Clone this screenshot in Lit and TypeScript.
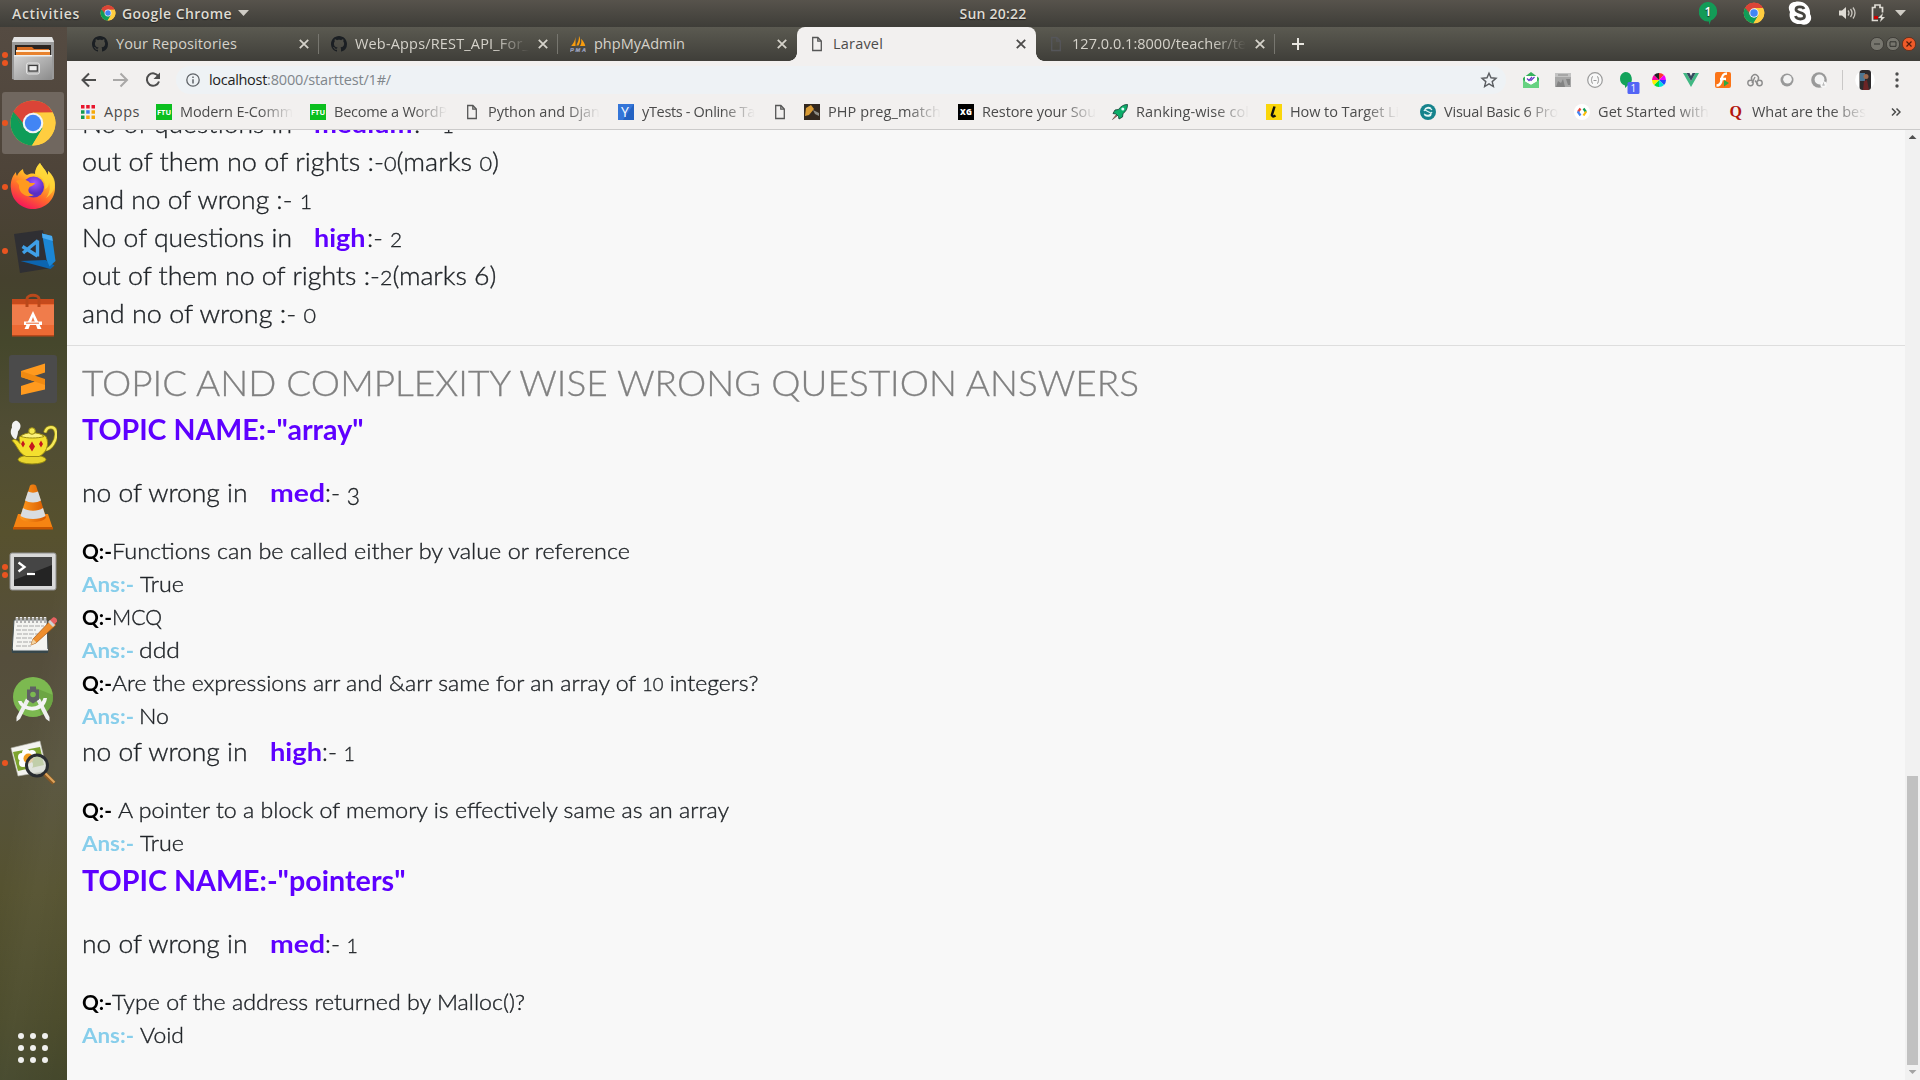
import { LitElement, html, css, nothing, TemplateResult } from "lit";
import { customElement, property, query } from "lit/decorators.js";

/* Text set to an exact width, by letter spacing or by stretching the glyphs. */
@customElement("fit-text")
class FitText extends LitElement {
  @property() text = "";
  @property({ type: Number }) w = 0;
  @property({ type: Boolean }) stretch = false;
  @query(".run") run!: HTMLElement;

  static styles = css`
    :host { display: block; white-space: pre; flex: none; }
    .run { display: inline-block; transform-origin: 0 50%; }
    .low { font-size: 0.8em; -webkit-text-stroke: 0.3px currentColor; }
    .drop { position: relative; top: 0.12em; font-size: 0.92em; }
  `;

  updated() {
    this.style.width = `${this.w}px`;
    this.run.style.letterSpacing = "0";
    this.run.style.transform = "none";
    const natural = this.run.getBoundingClientRect().width;
    if (this.stretch) {
      this.run.style.transform = `scaleX(${this.w / natural})`;
    } else {
      this.run.style.letterSpacing = `${(this.w - natural) / Math.max(1, this.text.length)}px`;
    }
  }

  render() {
    const parts = this.stretch ? this.text.split(/(\d)/) : [this.text];
    return html`<span class="run">${parts.map((p) =>
      /^[012]$/.test(p) && this.stretch ? html`<span class="low">${p}</span>`
      : p === "3" && this.stretch ? html`<span class="drop">${p}</span>` : p)}</span>`;
  }
}

const chrome = html`<svg viewBox="0 0 48 48"><circle cx="24" cy="24" r="22.5" fill="#fcc934"/>
<path d="M24 24 4.500 12.800A22.500 22.500 0 0 0 23 46.500L34 29z" fill="#0f9d58"/>
<path d="M4.500 12.800A22.500 22.500 0 0 1 43.600 13.200H24L14 29.500z" fill="#db4437"/>
<path d="M43.600 13.200A22.500 22.500 0 0 1 23 46.500L33.500 29 30 14z" fill="#ffcd40"/>
<path d="M4.500 12.800 14 29.500 24 24z" fill="#0f9d58"/><path d="M4.500 12.800A22.500 22.500 0 0 1 43.600 13.200H24L14 24z" fill="#db4437"/>
<circle cx="24" cy="24" r="10.300" fill="#f4f4f4"/><circle cx="24" cy="24" r="8.200" fill="#4285f4"/></svg>`;

const github = html`<svg viewBox="0 0 16 16"><path fill="#1b1f23" fill-rule="evenodd" d="M8 0C3.580 0 0 3.580 0 8c0 3.540 2.290 6.530 5.470 7.590.4.070.550-.170.550-.380 0-.190-.010-.820-.010-1.490-2.010.370-2.530-.490-2.690-.940-.090-.230-.480-.940-.820-1.130-.280-.150-.680-.520-.010-.530.630-.010 1.080.580 1.230.820.720 1.210 1.870.870 2.330.660.070-.520.280-.870.510-1.070-1.780-.2-3.640-.890-3.640-3.950 0-.870.310-1.590.820-2.150-.080-.2-.360-1.020.080-2.120 0 0 .670-.210 2.200.820.640-.180 1.320-.270 2-.270s1.360.090 2 .270c1.530-1.040 2.200-.820 2.200-.820.440 1.100.160 1.920.080 2.120.510.560.820 1.270.820 2.150 0 3.070-1.870 3.750-3.650 3.950.290.250.540.730.540 1.480 0 1.070-.010 1.930-.010 2.200 0 .210.150.460.550.380A8.010 8.010 0 0 0 16 8c0-4.420-3.580-8-8-8z"/></svg>`;
const page = (c: string) => html`<svg viewBox="0 0 16 16"><path d="M3.700 1.500h5.200l3.400 3.500v9.500H3.700zM8.800 1.800v3.400h3.400" fill="none" stroke=${c} stroke-width="1.300"/></svg>`;
const cross = html`<svg class="x" viewBox="0 0 10 10"><path d="M1.500 1.500l7 7M8.500 1.500l-7 7" fill="none" stroke="currentColor" stroke-width="1.500"/></svg>`;
const pma = html`<svg viewBox="0 0 16 16"><path d="M5.500 1v9H1.200C3 8 5 5 5.500 1zM9 0c2 3 1 7-.5 9.500H6.300C8 6 9 4 9 0zM11 3c2 1 4 5 4.300 7H10c1.500-2 1.600-5 1-7z" fill="#f89c0e"/><text x="0" y="15.500" font-size="5.600" font-weight="bold" font-style="italic" font-family="Liberation Sans" fill="#6c78af" stroke="#ddd" stroke-width=".2" textLength="16">PMA</text></svg>`;

const dockIcons: { name: string; dots: number; svg: TemplateResult }[] = [
  { name: "files", dots: 2, svg: html`<svg viewBox="0 0 48 48"><defs><linearGradient id="fa" x2="1" y2="1"><stop stop-color="#d5d5d5"/><stop offset="1" stop-color="#8b8b8b"/></linearGradient></defs>
<path d="M5 2h38l2 4v38l-3 1H6l-3-1V6z" fill="#9a9a9a"/><path d="M5 2h38l2 5H3z" fill="#e3e3e3"/><path d="M6 10h36v12H6z" fill="#2b2420"/><path d="M8 12h15l2 2h15v4H8z" fill="#d76b21"/><path d="M7 15h34v3H7z" fill="#fff0dc"/><path d="M7 17h34v5H7z" fill="#e8822d"/><path d="M5 20h38v25H5z" fill="url(#fa)"/><path d="M5 20h38v1.500H5z" fill="#eee"/><rect x="17.500" y="28" width="13" height="11" rx="2" fill="#b4b4b4" stroke="#e3e3e3"/><rect x="19.800" y="30.500" width="8.500" height="5.500" fill="#eee" stroke="#3d3d3d" stroke-width="1.200"/></svg>` },
  { name: "chrome", dots: 1, svg: chrome },
  { name: "firefox", dots: 1, svg: html`<svg viewBox="0 0 48 48"><defs><linearGradient id="ff" x1=".8" y1="0" x2=".3" y2="1"><stop offset="0" stop-color="#fff44f"/><stop offset=".35" stop-color="#ffbd27"/><stop offset=".65" stop-color="#ff6a2b"/><stop offset="1" stop-color="#f5105d"/></linearGradient><radialGradient id="fp" cx=".55" cy=".3"><stop stop-color="#a455ff"/><stop offset="1" stop-color="#5a2fc4"/></radialGradient></defs>
<path d="M31 0c-4 4-5 8-5 11-3-1-6 0-8 1-3-1-4-4-4-6-3 2-5 4-6 7-1-2-1-3-1-4C3 13 1 20 2 26c1 12 11 20 22 20 13 0 22-10 22-21 0-8-3-14-7-17 0 2 0 3-.5 4C37 7 33 4 31 0z" fill="url(#ff)"/><circle cx="24.500" cy="24" r="10.500" fill="url(#fp)"/><path d="M7 18c6-3 12-1 14 2h5c-1 3-5 3-6 5-2 3 1 7 5 7-8 4-16-3-15-10z" fill="#ff9a1f"/><path d="M31 0c-4 4-5 8-4 12 7 2 10 7 9 14 3-1 4-4 4-7 2 6 0 12-3 16 7-5 9-10 9-14 0-7-5-11-7-13 0 2 0 3-.5 4C37 7 33 4 31 0z" fill="#ffd83a" opacity=".75"/></svg>` },
  { name: "code", dots: 1, svg: html`<svg viewBox="0 -1 48 48"><path d="M5 6 34 2l8 38-31 5z" fill="#2f2f33"/><path d="M11.500 33l25-1 9 5.500-4 3.500z" fill="#0c65b0"/><path d="M33 5.500 43 8l3.500 25-6 5.500-3-7z" fill="#1b86d4"/><path d="M33 5.500 43 8l.8 5-10.200-3z" fill="#48aaf0"/><path d="M28.500 12.500v16M29 12.500 14 25M13.500 18.500l15 9.500" fill="none" stroke="#3f9fe6" stroke-width="3.400"/></svg>` },
  { name: "software", dots: 0, svg: html`<svg viewBox="0 0 48 48"><path d="M3 8h42v37H3z" fill="#ec6a34"/><path d="M3 8h42v5H3z" fill="#c64a1c"/><path d="M3 14h42v20H3z" fill="#f07c4b"/><path d="M18 16V8c0-5 12-5 12 0v8" fill="none" stroke="#b9481b" stroke-width="3"/><path d="M24 20l8.500 18H28.500L24 26l-4.500 12H15.500z" fill="#fff"/><path d="M15 30.500h18v3.500H15z" fill="#fff"/><path d="M17 32.200h13" stroke="#ec6a34"/><path d="M3 44h42v1.500H3z" fill="#b9481b"/></svg>` },
  { name: "sublime", dots: 0, svg: html`<svg viewBox="0 0 48 48"><rect width="48" height="48" rx="3" fill="#4b4b4b"/><path d="M36 8.500v9l-14 4.500 14 4.500v8L12 40v-9l14-4.500-14-4.500v-6z" fill="#ff9a1e"/><path d="M12 16v6l24 8v-6z" fill="#f08a12"/></svg>` },
  { name: "teapot", dots: 0, svg: html`<svg viewBox="0 1.500 48 48"><path d="M5 21c-5-5-3-9-2-11-1-5 4-9 7-5 3 3 1 7-1 9 0 3-1 5-2 8z" fill="#f2f2f2"/><path d="M36 15c2-7 10-7 11 0s-5 18-12 17" fill="none" stroke="#8f8412" stroke-width="4"/><path d="M36 15c2-7 10-7 11 0s-5 18-12 17" fill="none" stroke="#f5e85a" stroke-width="2.400"/><ellipse cx="23" cy="42" rx="14" ry="4.500" fill="#e8d52e" stroke="#8f8412"/><path d="M10 20c4-5 22-5 27-1 4 8 0 17-7 20H17C9 35 9 29 3 23c2-2 5-1 8 3z" fill="#f3df2e" stroke="#9a8a13"/><path d="M12 19c3-5 19-5 23 0-6 2-17 2-23 0z" fill="#fbf27d" stroke="#9a8a13"/><circle cx="23" cy="13.500" r="3.300" fill="#f6e94f" stroke="#9a8a13"/><path d="M23 24l3 5-3 5-3-5zM14 23l2 3.500-2 3.500-2-3.500zM32 23l2 3.500-2 3.500-2-3.500z" fill="#c6161d"/></svg>` },
  { name: "vlc", dots: 0, svg: html`<svg viewBox="0 0 48 48"><defs><linearGradient id="vl"><stop stop-color="#ff9b1f"/><stop offset="1" stop-color="#d85a00"/></linearGradient></defs><path d="M9 31h30l5 15H4z" fill="#f68412"/><path d="M4 44h40v2.500H4z" fill="#c65500"/><path d="M21 2.500c1-1.500 5-1.500 6 0l10 32c-3 6-23 6-26 0z" fill="url(#vl)"/><path d="M19 8.500c3 1.500 7 1.500 10 0l3 9c-4 2.500-12 2.500-16 0zM14 25c5 3.500 15 3.500 20 0l2.500 8c-6 4-19 4-25 0z" fill="#d9dde0"/></svg>` },
  { name: "terminal", dots: 2, svg: html`<svg viewBox="0 -2 48 48"><rect x="1" y="4" width="46" height="37" rx="2" fill="#d9d9d9" stroke="#8e8e8e"/><rect x="5" y="8" width="38" height="29" fill="#242424"/><path d="M5 8h38v8L5 31z" fill="#454545"/><path d="M9.500 13.500l6 4.500-6 4.500" fill="none" stroke="#fff" stroke-width="2.300"/><path d="M18 25h8" stroke="#fff" stroke-width="2.200"/></svg>` },
  { name: "notes", dots: 0, svg: html`<svg viewBox="0 -1 48 48"><path d="M5 8h33l1 32H3z" fill="#f4f4f1" stroke="#465053"/><path d="M3 37h36v4H3z" fill="#37474b"/><path d="M4 37h35v1.500H4z" fill="#eee"/><path d="M8 14h27M7 18h20M8 22h21M7 26h16M8 30h17M7 34h15" stroke="#a8a8a8" stroke-dasharray="5 1"/><path d="M8 11V5M12 11V5M16 11V5M20 11V5M24 11V5M28 11V5M32 11V5M36 11V5" stroke="#eee" stroke-width="2.500"/><path d="M8 11V6M12 11V6M16 11V6M20 11V6M24 11V6M28 11V6M32 11V6M36 11V6" stroke="#555" stroke-width=".8"/><path d="M42 8l5 5-20 18-5 2 2-6z" fill="#ee8e2e" stroke="#a35613" stroke-width=".7"/><path d="M40 9l4-3.500c2-1 5 2 4 4L45 13z" fill="#e76161"/><path d="M39 10l2-2 5 5-2 2z" fill="#cfd3d4"/><path d="M22 33l2-6 3.500 3.500z" fill="#f3d3a0"/></svg>` },
  { name: "studio", dots: 0, svg: html`<svg viewBox="0 0 48 48"><circle cx="24" cy="22" r="20" fill="#7cb950"/><path d="M24 12l20 8A20 20 0 0 1 32 40z" fill="#659c3d" opacity=".7"/><path d="M20.500 25.500 11 44l-3.500 2.500V42L17 23.500zM27.500 25.500 37 44l3.500 2.500V42L31 23.500z" fill="#eee"/><path d="M9 26c3 12 27 14 29-3h-3.500c-3 11-18 11-22 3z" fill="#f4f4f4"/><path d="M24 11.500v4" stroke="#5f6163" stroke-width="6"/><path d="M18 14.500h12v10l-6 4-6-4z" fill="#5f6163"/><circle cx="24" cy="19.500" r="2.800" fill="#7cb950"/></svg>` },
  { name: "viewer", dots: 1, svg: html`<svg viewBox="0 0 48 48"><path d="M2 9 31 2l7 30-29 5z" fill="#f3f3ef" stroke="#b3b3aa" stroke-width=".6"/><path d="M4 13 31 8l4 18-26 6z" fill="#7da32f"/><g fill="#fff"><circle cx="17" cy="14" r="4"/><circle cx="23" cy="15" r="4"/><circle cx="13" cy="18" r="4"/><circle cx="14" cy="24" r="4"/><circle cx="20" cy="26" r="4"/></g><circle cx="19.500" cy="19.500" r="5" fill="#f09b1c"/><circle cx="28" cy="26.500" r="10" fill="#d8dcd4" opacity=".75"/><circle cx="28" cy="26.500" r="10.500" fill="none" stroke="#2a2d31" stroke-width="3"/><path d="M36 35l9 9" stroke="#8b5a24" stroke-width="4.500"/><path d="M36.500 34.500l9 9" stroke="#e0a45c" stroke-width="2"/></svg>` },
];

const ftu = html`<svg viewBox="0 0 16 16"><path fill="#0bbf1f" d="M0 0h16v16H0z"/><text x="1" y="10.800" font-family="Open Sans" font-weight="bold" font-size="7.500" fill="#fff" textLength="14" lengthAdjust="spacingAndGlyphs">FTU</text></svg>`;
const bookmarks: { icon: TemplateResult; text: string; w?: number }[] = [
  { icon: ftu, text: "Modern E-Comm", w: 113 },
  { icon: ftu, text: "Become a WordP", w: 113 },
  { icon: page("#565656"), text: "Python and Djan", w: 112 },
  { icon: html`<svg viewBox="0 0 16 16"><path fill="#2462c2" d="M0 0h16v16H0z"/><path d="M0 0h16L5 16H0z" fill="#3475d8"/><text x="3" y="13" font-family="Open Sans" font-size="14" fill="#fff" textLength="10">Y</text></svg>`, text: "yTests - Online Ta", w: 113 },
  { icon: page("#565656"), text: "" },
  { icon: html`<svg viewBox="0 0 16 16"><path fill="#33281f" d="M0 0h16v16H0z"/><path d="M2 4 7 1l3 4-5 6-4 1z" fill="#d99b35"/><path d="M9 6l6 3v3l-4-2z" fill="#8d8b85"/></svg>`, text: "PHP preg_match", w: 113 },
  { icon: html`<svg viewBox="0 0 16 16"><path d="M0 0h16v16H0z"/><text x="2" y="11" font-family="Open Sans" font-weight="800" font-size="8" fill="#fff" textLength="12">XG</text></svg>`, text: "Restore your Sou", w: 114 },
  { icon: html`<svg viewBox="0 0 16 16"><path d="M15.500.5c-4 0-7 2-9 5L3 6 1 9.500l3 .5 2.500 2.500L7 15l3.500-2 .5-3.500c3-2 4.500-5 4.500-9z" fill="#0cae69" stroke="#194a3d" stroke-width=".9"/><circle cx="10.800" cy="5" r="1.500" fill="#dff"/><path d="M4 11l-3.500 4.500L5 12z" fill="#e25839" stroke="#444" stroke-width=".6"/></svg>`, text: "Ranking-wise col", w: 113 },
  { icon: html`<svg viewBox="0 0 16 16"><path fill="#fad60a" d="M0 0h16v16H0z"/><path d="M8.500 2.500 6 10.500c-.4 2 1.300 2.500 3.500 1" fill="none" stroke="#111" stroke-width="2.500"/></svg>`, text: "How to Target Li", w: 109 },
  { icon: html`<svg viewBox="0 0 16 16"><circle cx="8" cy="8" r="8" fill="#15838c"/><path d="M11 4.500c-2-2-6-1-6 1s6 2 6 4.500-4 3-6.500 1M4 7c1-3 6-4 8-1M4 10c3 2 6 2 8-2" fill="none" stroke="#e5f6f6" stroke-width="1.200"/></svg>`, text: "Visual Basic 6 Pro", w: 114 },
  { icon: html`<svg viewBox="0 0 16 16"><circle cx="8" cy="8" r="8" fill="#fff"/><g fill="none" stroke-width="2.200"><path d="M6.500 4.500 4 8" stroke="#e94335"/><path d="M3.700 7.500l2.800 4" stroke="#4285f4"/><path d="M9.500 4.500 12 8" stroke="#0f9d58"/><path d="M12.200 7.500l-2.700 4" stroke="#fbbc05"/></g></svg>`, text: "Get Started with", w: 111 },
  { icon: html`<svg viewBox="0 0 16 16"><text x="1.500" y="13" font-family="Liberation Serif" font-weight="bold" font-size="16" fill="#b3160d">Q</text></svg>`, text: "What are the bes", w: 114 },
];

const exts: TemplateResult[] = [
  html`<svg viewBox="0 0 16 16"><path d="M0 6 8 0l8 6v10H0z" fill="#35b15b"/><path d="M2 4h12v6l-6 3-6-3z" fill="#fff"/><path d="M0 8l8 5 8-5v8H0z" fill="#68d282"/><path d="M4 6.500l2 2 3-3.500M7.500 8l.5.500 3.500-3.500" fill="none" stroke="#6537c5" stroke-width="1.200"/></svg>`,
  html`<svg viewBox="0 0 16 16"><path fill="#a7a7a7" d="M0 1h16v14H0z"/><path d="M0 1h16v4H0z" fill="#c3c3c3"/><path d="M3 3h10" stroke="#8a8a8a"/><path d="M1 15l2-6 3 2 2-4 2 8zM11 7h4v6h-2z" fill="#838383"/></svg>`,
  html`<svg viewBox="0 0 16 16"><circle cx="8" cy="8" r="7.300" fill="#f8f8f8" stroke="#9b9b9b" stroke-width="1.200"/><path d="M6 4.500c-2 0-.5 3-2 3.500 1.500.5 0 3.500 2 3.500M10 4.500c2 0 .5 3 2 3.500-1.500.5 0 3.500-2 3.500M6.500 8.500h3" fill="none" stroke="#999"/></svg>`,
  html`<svg viewBox="0 0 16 16" overflow="visible"><path d="M4.500 0a6.800 7 0 0 1 3 13.300L4.500 16v-2.500A6.800 7 0 0 1 4.500 0z" transform="translate(1.500)" fill="#13a35b"/><rect x="8.500" y="10" width="12" height="12" rx="1.500" fill="#5365f5"/><text x="11.500" y="19.700" font-size="10" font-family="Open Sans" fill="#fff">1</text></svg>`,
  html`<svg viewBox="0 0 16 16"><path d="M8 8V1a7 7 0 0 1 5 2z" fill="#f33"/><path d="M8 8l5-5a7 7 0 0 1 2 5z" fill="#e0f"/><path d="M8 8h7a7 7 0 0 1-2 5z" fill="#24f"/><path d="M8 8l5 5a7 7 0 0 1-5 2z" fill="#0dd"/><path d="M8 8v7a7 7 0 0 1-5-2z" fill="#0d4"/><path d="M8 8l-5 5a7 7 0 0 1-2-5z" fill="#fe0"/><path d="M8 8H1a7 7 0 0 1 2-5z" fill="#f0a"/><path d="M8 8 3 3a7 7 0 0 1 5-2z" fill="#222"/></svg>`,
  html`<svg viewBox="0 0 16 16"><path d="M0 1h3.500L8 9l4.500-8H16L8 15z" fill="#41b883"/><path d="M3.500 1h3L8 4l1.500-3h3L8 9z" fill="#35495e"/></svg>`,
  html`<svg viewBox="0 0 16 16"><rect width="16" height="16" rx="2" fill="#fb7417"/><path d="M12 1.500c-5 0-5 4-5.500 7-.5 3-2 5-5 5M5 7h6" fill="none" stroke="#fff" stroke-width="2.400"/><path d="M9 8l5 3-5 3.500z" fill="#2caa40"/></svg>`,
  html`<svg viewBox="0 0 16 16"><g fill="none" stroke="#8c8c8c" stroke-width="1.400"><path d="M5 8a3.500 3.500 0 1 1 6 0M8 8.500l3 4M8 5l-3 6"/><circle cx="3.500" cy="11" r="2.700"/><circle cx="12.500" cy="11" r="2.700"/></g></svg>`,
  html`<svg viewBox="0 0 16 16"><circle cx="8" cy="8" r="6.500" fill="#999"/><circle cx="8.500" cy="7.200" r="4.300" fill="#f3f3f3"/></svg>`,
  html`<svg viewBox="0 0 16 16"><circle cx="8" cy="8" r="7.800" fill="#999"/><circle cx="8.500" cy="7.500" r="4.900" fill="#f3f3f3"/><circle cx="12.500" cy="12.500" r="3.200" fill="#f7f7f7"/><path d="M12.500 10.500v3M11 13h3" stroke="#bbb"/></svg>`,
];

const tabs = [
  { icon: github, text: "Your Repositories", w: 121, kind: "" },
  { icon: github, text: "Web-Apps/REST_API_For_", w: 174, kind: "long" },
  { icon: pma, text: "phpMyAdmin", w: 91, kind: "" },
  { icon: page("#565656"), text: "Laravel", w: 50, kind: "active" },
  { icon: page("#55565a"), text: "127.0.0.1:8000/teacher/te", w: 174, kind: "long" },
];

type Seg = [text: string, width: number, cls?: string, gap?: number];
const count = (w: number): Seg => ["No of questions in", w, ""];
const wrong: Seg = ["no of wrong in", 165.5];
const q: Seg = ["Q:-", 30, "q"];
const a: Seg = ["Ans:-", 52, "a"];
const lines: { kind: string; segs: Seg[] }[] = [
  { kind: "p", segs: [count(210), ["medium", 98.5, "key", 22], [":-", 16, "", 1], ["1", 12, "", 12]] },
  { kind: "p", segs: [["out of them no of rights :-0(marks 0)", 417]] },
  { kind: "p", segs: [["and no of wrong :- 1", 230]] },
  { kind: "p", segs: [count(210), ["high", 51.5, "key", 22], [":- 2", 35, "", 1]] },
  { kind: "p", segs: [["out of them no of rights :-2(marks 6)", 414.5]] },
  { kind: "p", segs: [["and no of wrong :- 0", 234]] },
  { kind: "rule", segs: [] },
  { kind: "h", segs: [["TOPIC AND COMPLEXITY WISE WRONG QUESTION ANSWERS", 1057]] },
  { kind: "topic", segs: [['TOPIC NAME:-"array"', 281.5]] },
  { kind: "p spaced", segs: [wrong, ["med", 55, "key", 22], [":- 3", 35, "", 0]] },
  { kind: "s first", segs: [q, ["Functions can be called either by value or reference", 518]] },
  { kind: "s", segs: [a, ["True", 44, "", 5.5]] },
  { kind: "s", segs: [q, ["MCQ", 50]] },
  { kind: "s", segs: [a, ["ddd", 41, "", 5]] },
  { kind: "s", segs: [q, ["Are the expressions arr and &arr same for an array of 10 integers?", 646.5]] },
  { kind: "s", segs: [a, ["No", 30, "", 5]] },
  { kind: "p", segs: [wrong, ["high", 52, "key", 22], [":- 1", 33, "", 0]] },
  { kind: "s first", segs: [q, ["A pointer to a block of memory is effectively same as an array", 611, "", 5.500]] },
  { kind: "s", segs: [a, ["True", 44, "", 5.5]] },
  { kind: "topic again", segs: [['TOPIC NAME:-"pointers"', 323.5]] },
  { kind: "p spaced", segs: [wrong, ["med", 55, "key", 22], [":- 1", 33, "", 0]] },
  { kind: "s first", segs: [q, ["Type of the address returned by Malloc()?", 413]] },
  { kind: "s", segs: [a, ["Void", 44, "", 5.5]] },
];

@customElement("app-root")
class AppRoot extends LitElement {
  static styles = css`
    :host { display: flex; flex-direction: column; width: 1920px; height: 1080px; overflow: hidden; font-family: "Open Sans", "Noto Sans", sans-serif; font-size: 14.5px; }
    * { box-sizing: border-box; }
    svg { display: block; flex: none; }
    .panel { height: 27px; flex: none; display: flex; align-items: center; justify-content: space-between; padding-bottom: 1px; background: linear-gradient(#57534c, #3e3d38); color: #dfdbd2; font-weight: 600; font-size: 14px; text-shadow: 0 1px 1px #222; }
    .side { display: flex; align-items: center; width: 860px; }
    .side.left { padding-left: 12px; }
    .side.right { justify-content: flex-end; padding-right: 14px; }
    .clock { margin-left: 66px; }
    .i18 { width: 16px; height: 16px; margin: 0 6px 0 20px; }
    .caret { width: 11px; height: 6px; margin-left: 6px; background: #cfccc5; clip-path: polygon(0 0, 100% 0, 50% 100%); }
    .bubble { width: 18px; height: 23px; }
    .tray-chrome { width: 22px; height: 22px; margin-left: 26px; }
    .skype { width: 24px; height: 24px; margin-left: 23px; }
    .vol { width: 18px; height: 16px; margin-left: 26px; }
    .bat { width: 16px; height: 18px; margin-left: 14px; }
    .side.right .caret { margin-left: 9px; }
    .desk { flex: 1; display: flex; min-height: 0; }
    .dock { width: 67px; flex: none; display: flex; flex-direction: column; background: linear-gradient(100deg, transparent 60%, #ffffff08 75%, transparent), linear-gradient(#554b42, #4d4338 15%, #45412e 24%, #45472c 30%, #504d34 38%, #57512e 48%, #554e3c 60%, #57533d 70%, #555230 82%, #4b4b2b 94%, #44472b); }
    .app { height: 64px; flex: none; display: flex; align-items: center; }
    .dots { width: 9px; flex: none; display: flex; flex-direction: column; gap: 2px; padding-left: 2px; }
    .dot { width: 6px; height: 6px; border-radius: 50%; background: #e95420; }
    .app svg { width: 48px; height: 48px; }
    .app.on { margin: 1px 3px 1px 2px; height: 62px; border-radius: 3px; background: #70675f; }
    .app.on .dots { width: 7px; padding-left: 0; }
    .grid { margin: auto 0 17px 18px; display: grid; grid-template-columns: repeat(3, 6px); gap: 6px; }
    .grid i { width: 6px; height: 6px; border-radius: 50%; background: #f0f0ee; }
    .window { flex: 1; display: flex; flex-direction: column; min-width: 0; background: #f2f0ef; }
    .tabs { height: 34px; flex: none; display: flex; padding-left: 13px; background: linear-gradient(#5b5a51, #3f3e39); color: #d5d2ca; }
    .tab { width: 239px; display: flex; align-items: center; padding: 0 9px 1px 12px; gap: 8px; position: relative; }
    .tab:not(.active)::after { content: ""; position: absolute; right: 0; top: 7px; height: 20px; width: 1px; background: #77766f; }
    .tab.pre::after { display: none; }
    .tab svg { width: 16px; height: 16px; }
    .tab .x { width: 12px; height: 12px; margin-left: auto; }
    .tab.active { background: #f2f0ef; color: #4c4b4a; border-radius: 8px 8px 0 0; }
    .tab.active::before, .tab.active::after { content: ""; position: absolute; bottom: 0; width: 8px; height: 8px; }
    .tab.active::before { left: -8px; background: radial-gradient(circle at 0 0, transparent 7.5px, #f2f0ef 8px); }
    .tab.active::after { right: -8px; background: radial-gradient(circle at 100% 0, transparent 7.5px, #f2f0ef 8px); z-index: 1; }
    .long fit-text { margin-right: -20px; }
    .long fit-text, .bm fit-text { -webkit-mask-image: linear-gradient(90deg, #000 calc(100% - 34px), transparent); }
    .plus { width: 14px; height: 14px; margin: 10px 0 0 16px; }
    .buttons { margin-left: auto; display: flex; align-items: center; gap: 2px; padding: 0 4px 1px 0; }
    .buttons svg { width: 14px; height: 14px; }
    .bar { height: 38px; flex: none; display: flex; align-items: center; padding: 0 0 1px 13px; color: #505050; }
    .bar .nav { width: 18px; height: 18px; margin-right: 14px; }
    .omni { width: 1330px; flex: none; height: 28px; border-radius: 14px; background: #eef2f5; display: flex; align-items: center; padding: 0 8px 0 10px; color: #80868b; }
    .info { width: 14px; height: 14px; margin-right: 9px; }
    .host { color: #222; }
    .star { width: 18px; height: 18px; margin-left: auto; }
    .exts { display: flex; gap: 16px; margin-left: 17px; }
    .exts svg { width: 16px; height: 16px; }
    .sep { width: 1px; height: 20px; background: #cac8c7; margin: 0 12px 0 15px; }
    .avatar { width: 20px; height: 20px; }
    .menu { width: 4px; height: 16px; margin-left: 20px; }
    .marks { height: 31px; flex: none; display: flex; align-items: center; gap: 16px; padding: 0 0 5px 13px; color: #4b4b4b; border-bottom: 1px solid #cbcaca; }
    .bm { display: flex; align-items: center; gap: 8px; }
    .bm svg { width: 16px; height: 16px; }
    .bm.apps fit-text { -webkit-mask-image: none; }
    .more { width: 10px; height: 10px; margin-left: 9px; }
    .view { flex: 1; display: flex; min-height: 0; }
    .page { flex: 1; overflow: hidden; background: #f8f8f8; color: #212529; font-family: Lato, sans-serif; }
    .lines { margin-top: -26px; }
    .row { display: flex; padding-left: 15px; }
    .p { height: 38px; line-height: 38px; font-size: 25.2px; font-weight: 400; }
    .s { height: 33px; line-height: 33px; font-size: 20.8px; }
    .s.first { margin-top: 23px; }
    .rule { height: 1px; background: #dedede; margin: 13px 0 14px; }
    .h { height: 44px; line-height: 46px; font-size: 35.5px; font-weight: 300; color: #808080; -webkit-text-stroke: 0.3px #808080; }
    .topic { height: 42px; line-height: 42px; font-size: 28px; font-weight: 700; color: #5e00ff; margin-top: 4px; }
    .topic.again { margin-top: 0; }
    .spaced { margin-top: 23px; }
    .plain { font-weight: 300; -webkit-text-stroke: 0.35px currentColor; }
    .key { color: #5e00ff; font-weight: 700; }
    .q { color: #000; font-weight: 700; }
    .a { color: #87ceeb; font-weight: 700; }
    .scroll { width: 15px; background: #f1f1f1; display: flex; flex-direction: column; justify-content: space-between; align-items: center; padding: 5px 0 6px; }
    .up, .down { width: 8px; height: 4px; flex: none; }
    .up { background: #505050; clip-path: polygon(50% 0, 100% 100%, 0 100%); }
    .down { background: #a3a3a3; clip-path: polygon(0 0, 100% 0, 50% 100%); }
    .thumb { width: 11px; height: 289px; background: #c1c1c1; margin: auto 0 5px; }
  `;

  private seg([text, w, cls = "", gap = 0]: Seg, kind: string) {
    const plain = cls || kind === "h" || kind.startsWith("topic") ? cls : "plain";
    return html`<fit-text class=${plain} style="margin-left:${gap}px" .text=${text} .w=${w} .stretch=${true}></fit-text>`;
  }

  render() {
    return html`
      <div class="panel">
        <div class="side left">
          <fit-text text="Activities" .w=${68}></fit-text>
          <div class="i18">${chrome}</div>
          <fit-text text="Google Chrome" .w=${110}></fit-text>
          <div class="caret"></div>
        </div>
        <fit-text class="clock" text="Sun 20:22" .w=${67}></fit-text>
        <div class="side right">
          <svg class="bubble" viewBox="0 0 18 23"><path d="M9 0a9 9.500 0 0 1 3 18.500L10 23V19.500A9 9.800 0 1 1 9 0z" fill="#139b57"/><text x="5.500" y="14" font-size="12" fill="#fff">1</text></svg>
          <div class="tray-chrome">${chrome}</div>
          <svg class="skype" viewBox="0 0 24 24"><path d="M7 1c8-2 16 4 15 12 4 6-3 13-9 10C5 24 0 18 2 11-1 6 2 1 7 1z" fill="#fff"/><path d="M16 8c-1-3-8-3-8 .5 0 4 8.500 2 8.500 6.500 0 4-8 4-9 0" fill="none" stroke="#45443f" stroke-width="2.800"/></svg>
          <svg class="vol" viewBox="0 0 18 16"><path d="M1 5.500h3L8 2v12L4 10.500H1z" fill="#dedbd4"/><path d="M10 5.500q2 2.500 0 5M12.500 4q3 4 0 8M15 2.500q4 5.500 0 11" fill="none" stroke="#c9c6bf" stroke-width="1.300"/></svg>
          <svg class="bat" viewBox="0 0 16 18"><path d="M8 16.500H2.500v-13H5V1h5v2.500h2.500v5" fill="none" stroke="#dedbd4" stroke-width="1.700"/><path d="M4 12h4v3H4z" fill="#c00"/><path d="M13 9l-5 5h3l-1 4 5-5h-3z" fill="#dedbd4"/></svg>
          <div class="caret"></div>
        </div>
      </div>
      <div class="desk">
        <div class="dock">
          ${dockIcons.map((d) => html`<div class="app ${d.name === "chrome" ? "on" : ""}">
            <div class="dots">${Array.from({ length: d.dots }, () => html`<div class="dot"></div>`)}</div>${d.svg}</div>`)}
          <div class="grid">${Array.from({ length: 9 }, () => html`<i></i>`)}</div>
        </div>
        <div class="window">
          <div class="tabs">
            ${tabs.map((t, i) => html`<div class="tab ${t.kind} ${i === 2 ? "pre" : ""}">${t.icon}<fit-text .text=${t.text} .w=${t.w}></fit-text>${cross}</div>`)}
            <svg class="plus" viewBox="0 0 14 14"><path d="M7 1v12M1 7h12" stroke="#e8e6e0" stroke-width="2"/></svg>
            <div class="buttons">
              <svg viewBox="0 0 14 14"><circle cx="7" cy="7" r="6.600" fill="#77766e" stroke="#33322e" stroke-width=".7"/><path d="M4 7h6" stroke="#33322e"/></svg>
              <svg viewBox="0 0 14 14"><circle cx="7" cy="7" r="6.600" fill="#77766e" stroke="#33322e" stroke-width=".7"/><path d="M4 4.800h6v4.500H4z" fill="none" stroke="#33322e"/></svg>
              <svg viewBox="0 0 14 14"><circle cx="7" cy="7" r="6.600" fill="#ef5a29" stroke="#5b2513" stroke-width=".7"/><path d="M4.500 4.500l5 5M9.500 4.500l-5 5" stroke="#521c0b" stroke-width="1.200"/></svg>
            </div>
          </div>
          <div class="bar">
            <svg class="nav" viewBox="0 0 18 18"><path d="M16 9H2.500M9 2.500 2.500 9 9 15.500" fill="none" stroke="#4d4d4d" stroke-width="2"/></svg>
            <svg class="nav" viewBox="0 0 18 18"><path d="M1 9h13.500M8.500 2.500 15 9l-6.500 6.500" fill="none" stroke="#a9a8a7" stroke-width="2"/></svg>
            <svg class="nav" viewBox="0 0 18 18"><path d="M14.500 5.500A6.200 6.200 0 1 0 15 10.500" fill="none" stroke="#4d4d4d" stroke-width="2"/><path d="M16 1.500v6.500h-6.500z" fill="#4d4d4d"/></svg>
            <div class="omni">
              <svg class="info" viewBox="0 0 14 14"><circle cx="7" cy="7" r="6.200" fill="none" stroke="#5f6368" stroke-width="1.300"/><path d="M7 6.200v4.300M7 3.500v1.500" stroke="#5f6368" stroke-width="1.500"/></svg>
              <fit-text class="host" text="localhost" .w=${58}></fit-text><fit-text text=":8000/starttest/1#/" .w=${124}></fit-text>
              <svg class="star" viewBox="0 0 18 18"><path d="M9 2.200l2 4.600 5 .5-3.800 3.300 1.200 4.900L9 12.900l-4.400 2.600 1.200-4.900L2 7.300l5-.5z" fill="none" stroke="#5a5d61" stroke-width="1.400"/></svg>
            </div>
            <div class="exts">${exts}</div>
            <div class="sep"></div>
            <svg class="avatar" viewBox="0 0 20 20"><circle cx="10" cy="10" r="9.800" fill="#fff"/><rect x="4.500" y="0" width="11.500" height="20" rx="3" fill="#2d2a2c"/><path d="M5 3h5v8H5z" fill="#4c7692"/><circle cx="11" cy="6.500" r="2.500" fill="#a06b4e"/><path d="M8 20l1-9 3-1 2 10z" fill="#6c2526"/></svg>
            <svg class="menu" viewBox="0 0 4 16"><circle cx="2" cy="2" r="1.700" fill="#4d4d4d"/><circle cx="2" cy="8" r="1.700" fill="#4d4d4d"/><circle cx="2" cy="14" r="1.700" fill="#4d4d4d"/></svg>
          </div>
          <div class="marks">
            <div class="bm apps"><svg viewBox="0 0 16 16"><g><path d="M1 1h3.500v3.500H1zM6.200 1h3.500v3.500H6.200zM11.500 1H15v3.500h-3.500z" fill="#e8152c"/><path d="M1 6.200h3.500v3.500H1zM1 11.500h3.500V15H1z" fill="#149a50"/><path d="M6.200 6.200h3.500v3.500H6.200z" fill="#3b7df0"/><path d="M11.500 6.200H15v3.500h-3.500zM6.200 11.500h3.500V15H6.200zM11.500 11.500H15V15h-3.500z" fill="#f5a90b"/></g></svg><fit-text text="Apps" .w=${36}></fit-text></div>
            ${bookmarks.map((b) => html`<div class="bm">${b.icon}${b.text ? html`<fit-text .text=${b.text} .w=${b.w ?? 114} style="margin-right:${114 - (b.w ?? 114)}px"></fit-text>` : nothing}</div>`)}
            <svg class="more" viewBox="0 0 10 10"><path d="M1 1.500 4.500 5 1 8.500M5.500 1.500 9 5 5.500 8.500" fill="none" stroke="#4b4b4b" stroke-width="1.500"/></svg>
          </div>
          <div class="view">
            <div class="page"><div class="lines">
              ${lines.map((l) => l.kind === "rule" ? html`<div class="rule"></div>` : html`<div class="row ${l.kind}">${l.segs.map((s) => this.seg(s, l.kind))}</div>`)}
            </div></div>
            <div class="scroll"><div class="up"></div><div class="thumb"></div><div class="down"></div></div>
          </div>
        </div>
      </div>`;
  }
}
